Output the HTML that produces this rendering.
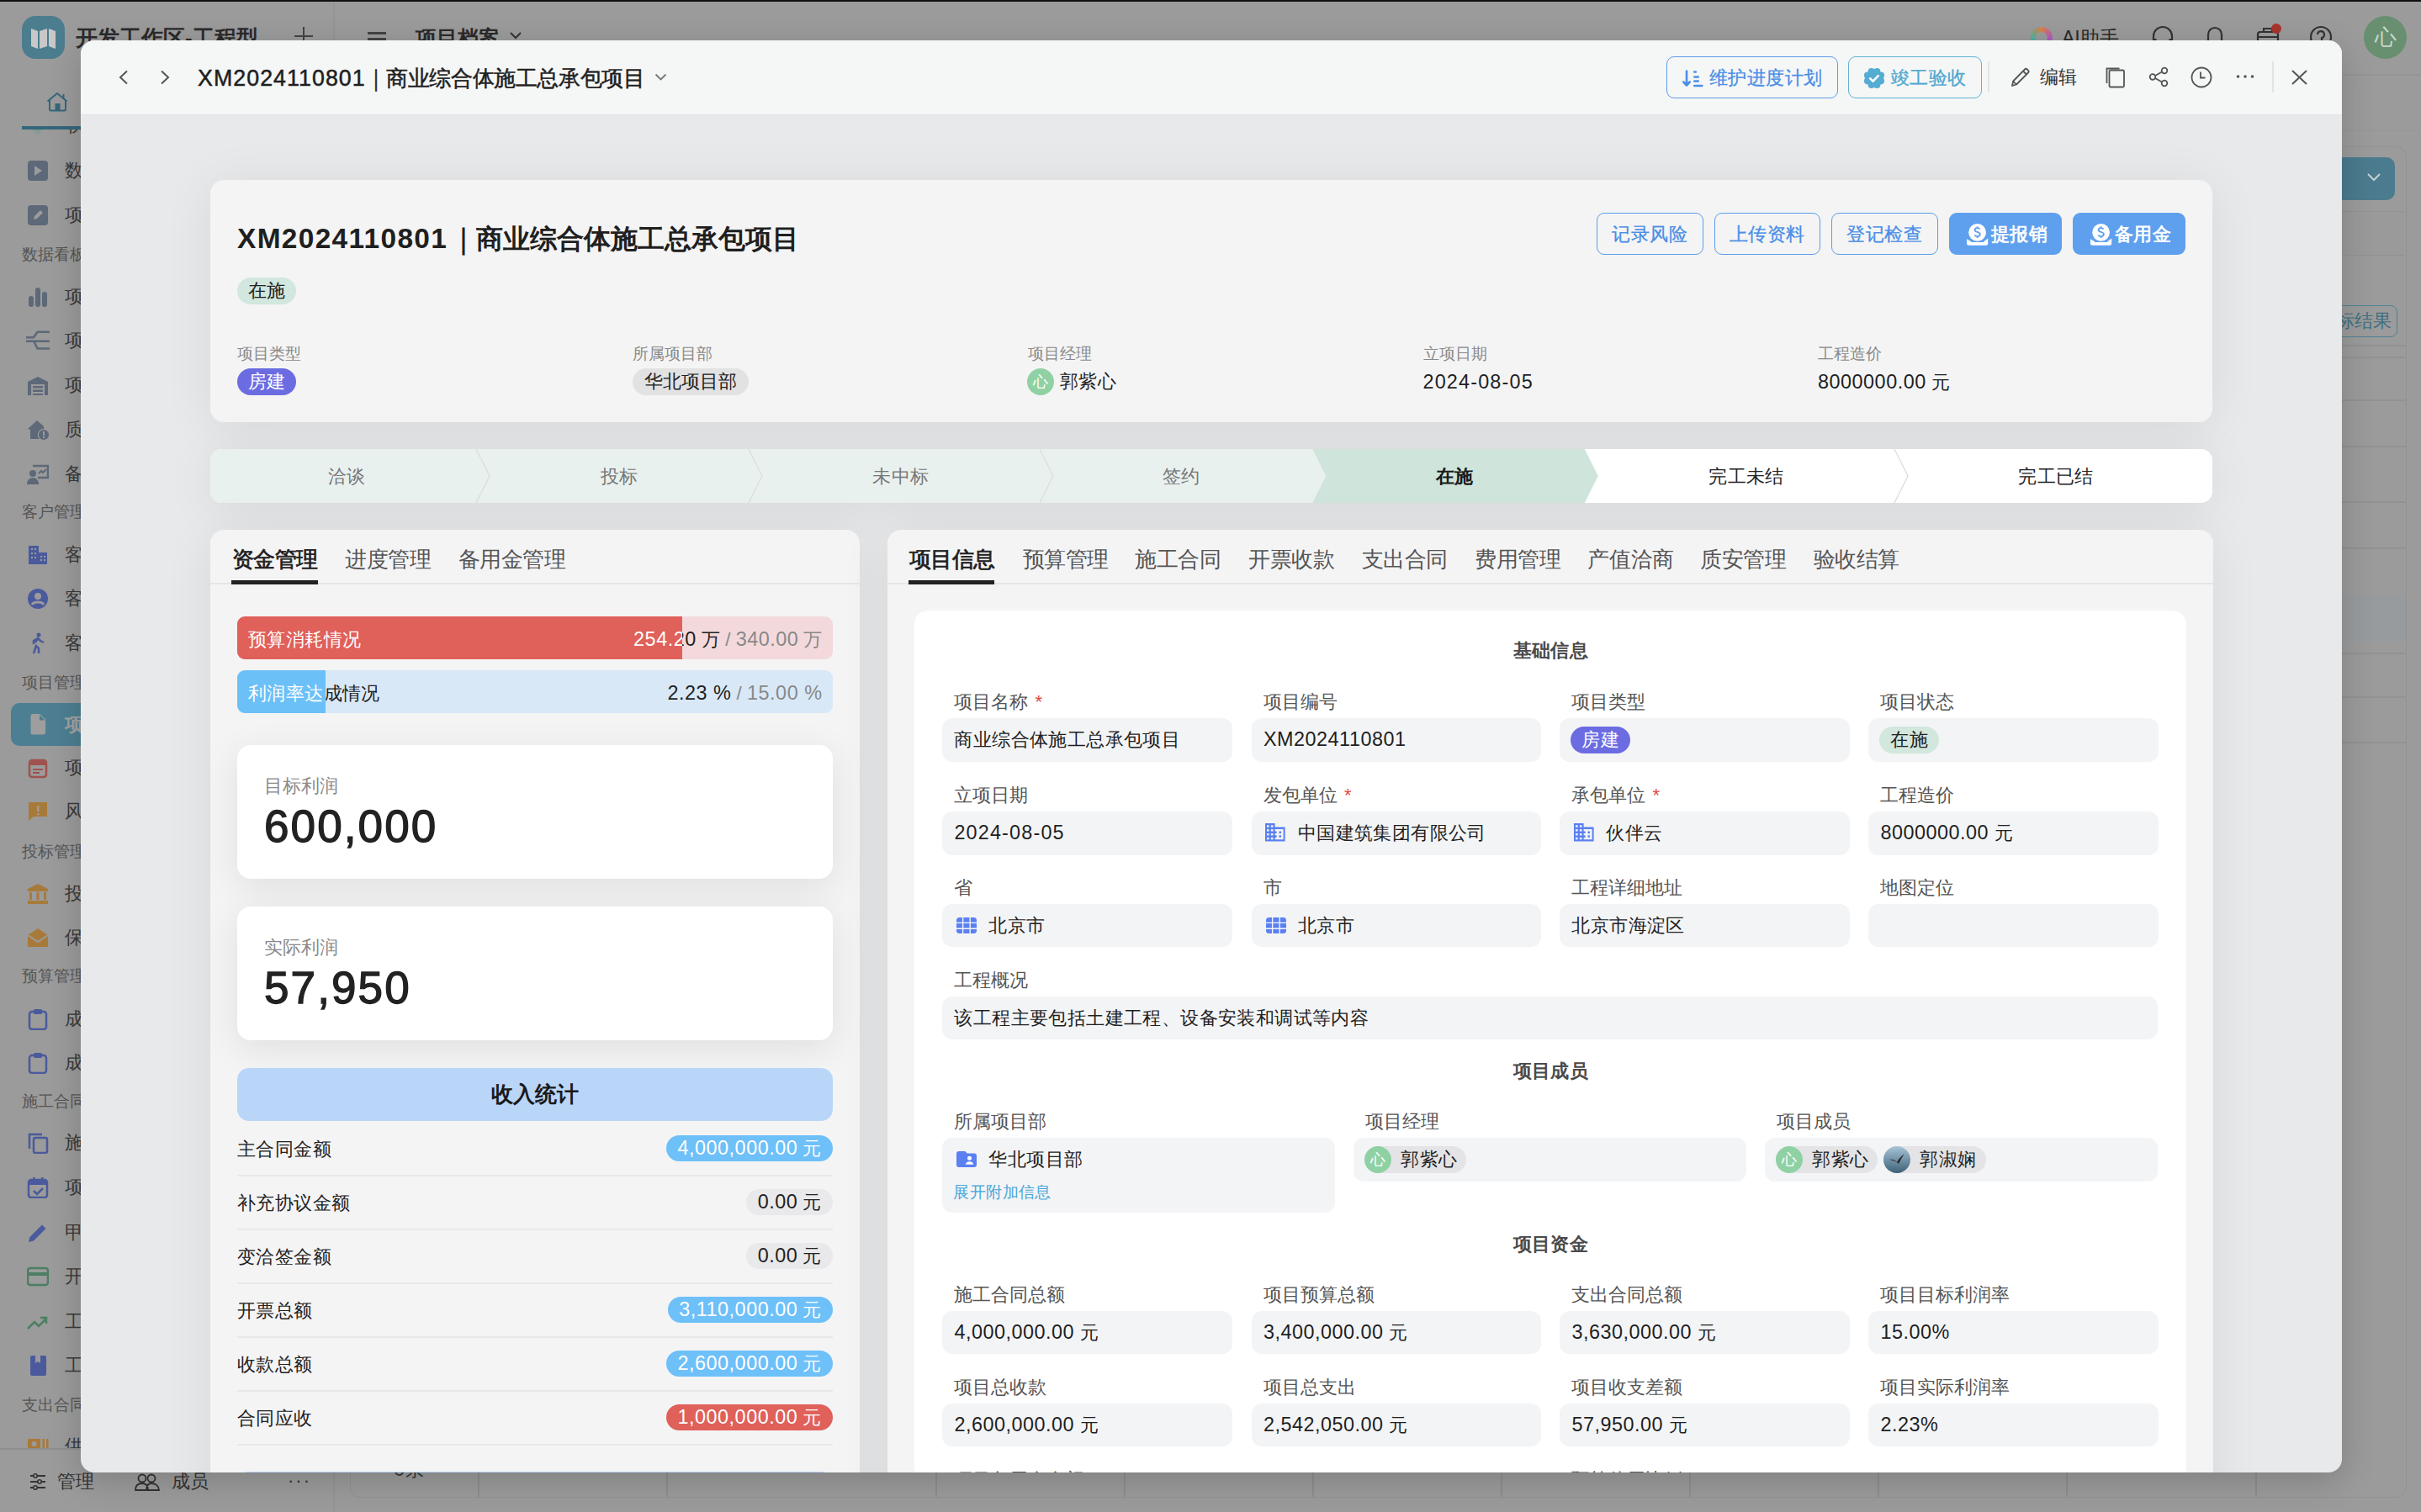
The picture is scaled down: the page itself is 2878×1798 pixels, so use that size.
<!DOCTYPE html>
<html><head><meta charset="utf-8">
<style>
*{box-sizing:border-box}
html,body{margin:0;padding:0}
body{width:2878px;height:1798px;overflow:hidden;position:relative;font-family:"Liberation Sans",sans-serif;background:#9b9b9b;color:#222}
.a{position:absolute}
.nw{white-space:nowrap}
/* ---------- background app ---------- */
#bg{position:absolute;left:0;top:0;width:2878px;height:1798px;background:#9b9b9b}
.sbtxt{position:absolute;font-size:22px;color:#3a3a3a;white-space:nowrap;line-height:26px}
.sbhdr{position:absolute;font-size:19px;color:#555;white-space:nowrap;line-height:22px;left:26px}
/* ---------- modal ---------- */
#modal{position:absolute;left:96px;top:48px;width:2688px;height:1703px;border-radius:16px;overflow:hidden;background:#e8e9eb;box-shadow:0 10px 40px rgba(0,0,0,.18)}
#mhead{position:absolute;left:0;top:0;width:2688px;height:89px;background:#f5f6f6;border-bottom:1px solid #e3e4e6}
.card{position:absolute;background:#f4f4f5;border-radius:16px}
.lbl{position:absolute;font-size:19px;color:#8a8a8a;white-space:nowrap;line-height:22px}
.val{position:absolute;font-size:22.4px;color:#1f1f1f;white-space:nowrap;line-height:26px}
.tag{position:absolute;height:32px;border-radius:16px;font-size:22px;line-height:32px;padding:0 13px;white-space:nowrap}
.obtn{position:absolute;height:50px;border:1.5px solid #5b9ee8;border-radius:9px;color:#4a8fe6;font-size:22.4px;line-height:50px;text-align:center;white-space:nowrap;-webkit-text-stroke-width:.3px}
.fbtn{position:absolute;height:50px;border-radius:9px;background:#5fa0ee;color:#fff;font-size:22.4px;line-height:50px;white-space:nowrap;-webkit-text-stroke-width:.7px}
.stg{position:absolute;top:0;height:64px;line-height:64px;font-size:22.4px;text-align:center;white-space:nowrap}
.tab{position:absolute;font-size:25.6px;letter-spacing:-.4px;line-height:30px;color:#555;white-space:nowrap}
.tab.on{color:#1f1f1f;-webkit-text-stroke-width:.75px}
.row{position:absolute;left:32px;width:708px;height:64px;border-bottom:2px solid #e8e8e9}
.row .rl{position:absolute;left:0;top:0;line-height:64px;font-size:22.4px;color:#222;white-space:nowrap}
.pill{position:absolute;right:0;top:15px;height:31px;line-height:31px;border-radius:16px;padding:0 13.5px;font-size:22.4px;white-space:nowrap}
.pb{background:#6ec0f8;color:#fff}
.pg{background:#e9e9eb;color:#222}
.pr{background:#e0605a;color:#fff}
.fl{position:absolute;font-size:22px;color:#555;white-space:nowrap;line-height:24px}
.fl i{color:#e5483f;font-style:normal;margin-left:8px}
.fb{position:absolute;height:51px;background:#f3f4f6;border-radius:12px;font-size:22.4px;line-height:51px;color:#1f1f1f;white-space:nowrap;padding-left:14px}
.n{font-size:1.045em;letter-spacing:.022em}
.nd{letter-spacing:.05em}
.nt{letter-spacing:.04em}
.m{-webkit-text-stroke-width:.5px}
.val,.fb,.rl,.obtn,.fbtn,.stg,.sh,.ls{letter-spacing:.4px}
.hls{letter-spacing:-.4px}
.sh{position:absolute;left:0;width:1512px;text-align:center;font-size:22.4px;font-weight:bold;color:#4a4a4a;line-height:26px}
</style></head><body>
<div id="bg">
    <div class="a" style="left:396px;top:0;width:2px;height:1798px;background:#959595"></div>
  <!-- logo -->
  <div class="a" style="left:26px;top:19px;width:51px;height:51px;border-radius:16px;background:#4b7d8e"></div>
  <svg class="a" style="left:36px;top:32px" width="31" height="27" viewBox="0 0 31 27"><path d="M1 2l8 3v21l-8-3z M11 5l9-3v21l-9 3z M22 2l8 3v21l-8-3z" fill="#c8c8c8"/></svg>
  <div class="a nw" style="left:90px;top:29px;font-size:25.6px;font-weight:bold;color:#2b2b2b;line-height:32px">开发工作区-工程型</div>
  <div class="a" style="left:350px;top:42px;width:22px;height:2px;background:#444"></div>
  <div class="a" style="left:360px;top:32px;width:2px;height:22px;background:#444"></div>
  <div class="a" style="left:437px;top:38px;width:22px;height:2.5px;background:#444"></div>
  <div class="a" style="left:437px;top:45px;width:22px;height:2.5px;background:#444"></div>
  <div class="a nw" style="left:494px;top:29px;font-size:25.2px;font-weight:bold;color:#2b2b2b;line-height:32px">项目档案</div>
  <svg class="a" style="left:606px;top:38px" width="14" height="9" viewBox="0 0 14 9"><path d="M1 1l6 6 6-6" stroke="#333" stroke-width="2" fill="none"/></svg>
  <!-- top right -->
  <div class="a" style="left:2414px;top:32px;width:26px;height:26px;border-radius:50%;background:conic-gradient(#d9824a,#b05bbd,#5c7fd0,#53b39e,#d9824a)"></div>
  <div class="a" style="left:2420px;top:38px;width:14px;height:14px;border-radius:50%;background:#9b9b9b"></div>
  <div class="a nw" style="left:2451px;top:31px;font-size:23px;color:#2b2b2b;line-height:28px">AI助手</div>
  <svg class="a" style="left:2557px;top:30px" width="28" height="26" viewBox="0 0 28 26"><path d="M3 20v-7a11 11 0 0 1 22 0v7" stroke="#333" stroke-width="2.2" fill="none"/><rect x="2" y="16" width="5" height="9" rx="2" fill="#333"/><rect x="21" y="16" width="5" height="9" rx="2" fill="#333"/></svg>
  <svg class="a" style="left:2622px;top:30px" width="22" height="26" viewBox="0 0 22 26"><path d="M3 20V11a8 8 0 0 1 16 0v9M1 20h20M9 24h4" stroke="#333" stroke-width="2.2" fill="none"/></svg>
  <svg class="a" style="left:2682px;top:32px" width="28" height="24" viewBox="0 0 28 24"><rect x="2" y="6" width="24" height="17" rx="3" stroke="#333" stroke-width="2.2" fill="none"/><path d="M9 6V2h10v4M2 12h24" stroke="#333" stroke-width="2.2" fill="none"/></svg>
  <div class="a" style="left:2700px;top:28px;width:12px;height:12px;border-radius:50%;background:#a8342c"></div>
  <svg class="a" style="left:2745px;top:30px" width="28" height="28" viewBox="0 0 28 28"><circle cx="14" cy="14" r="12" stroke="#333" stroke-width="2.2" fill="none"/><path d="M10 11a4 4 0 1 1 5 4v3" stroke="#333" stroke-width="2.2" fill="none"/></svg>
  <div class="a" style="left:2810px;top:19px;width:51px;height:51px;border-radius:50%;background:#678f70;color:#c9d8cc;font-size:26px;line-height:51px;text-align:center">心</div>
  <div class="a" style="left:398px;top:88px;width:2480px;height:1.5px;background:#959595"></div>
  <div class="a" style="left:398px;top:154px;width:2480px;height:1.5px;background:#989898"></div>
  <div class="a" style="left:0;top:154px;width:396px;height:12px;overflow:hidden">
    <div class="a nw" style="left:80px;top:-18px;font-size:22.4px;line-height:26px;color:#3a3a3a">快捷</div>
    <div class="a" style="left:34px;top:-4px;width:18px;height:12px;background:linear-gradient(200deg,#5a9a8a,rgba(90,154,138,0) 80%);clip-path:polygon(0 0,100% 0,60% 100%)"></div>
  </div>
  <!-- home tab -->
  <svg class="a" style="left:55px;top:109px" width="27" height="24" viewBox="0 0 27 24"><path d="M1.5 11.5L13 2l11.5 9.5M4 9.5V21a1.5 1.5 0 0 0 1.5 1.5h16A1.5 1.5 0 0 0 23 21V9.5M20.5 3v5" stroke="#34677a" stroke-width="2" fill="none"/><rect x="10.5" y="14" width="6" height="9" fill="#34677a"/></svg>
  <div class="a" style="left:26px;top:150px;width:370px;height:4px;background:#34677a"></div>
<!-- table card -->
  <div class="a" style="left:416px;top:174px;width:2445px;height:1607px;border:1.5px solid #929292;border-radius:12px"></div>
  <div class="a nw" style="left:468px;top:1733px;font-size:24px;line-height:28px;color:#3a3a3a">0条</div>
  <div class="a" style="left:568px;top:1751px;width:1.5px;height:29px;background:#8e8e8e"></div>
  <div class="a" style="left:792px;top:1751px;width:1.5px;height:29px;background:#8e8e8e"></div>
  <div class="a" style="left:1112px;top:1751px;width:1.5px;height:29px;background:#8e8e8e"></div>
  <div class="a" style="left:1336px;top:1751px;width:1.5px;height:29px;background:#8e8e8e"></div>
  <div class="a" style="left:1560px;top:1751px;width:1.5px;height:29px;background:#8e8e8e"></div>
  <div class="a" style="left:1784px;top:1751px;width:1.5px;height:29px;background:#8e8e8e"></div>
  <div class="a" style="left:2008px;top:1751px;width:1.5px;height:29px;background:#8e8e8e"></div>
  <div class="a" style="left:2232px;top:1751px;width:1.5px;height:29px;background:#8e8e8e"></div>
  <div class="a" style="left:2456px;top:1751px;width:1.5px;height:29px;background:#8e8e8e"></div>
  <div class="a" style="left:2681px;top:1751px;width:1.5px;height:29px;background:#8e8e8e"></div>
  <div class="a" style="left:2700px;top:187px;width:147px;height:51px;border-radius:10px;background:#4b7b8e"></div>
  <svg class="a" style="left:2814px;top:206px" width="16" height="10" viewBox="0 0 16 10"><path d="M1 1l7 7 7-7" stroke="#c6d0d4" stroke-width="2" fill="none"/></svg>
  <div class="a" style="left:2700px;top:251px;width:158px;height:53px;background:#9a9a9a;border-top:1.5px solid #929292;border-bottom:1.5px solid #929292"></div>
  <div class="a" style="left:2760px;top:363px;width:90px;height:38px;border:1.5px solid #4f8296;border-radius:8px;color:#3f6f82;font-size:22px;line-height:35px;text-align:right;padding-right:6px" class="nw">标结果</div>
  <div class="a" style="left:2700px;top:410px;width:160px;height:1.5px;background:#929292"></div>
  <div class="a" style="left:2700px;top:424px;width:160px;height:1.5px;background:#929292"></div>
  <div class="a" style="left:2700px;top:475px;width:160px;height:1.5px;background:#929292"></div>
  <div class="a" style="left:2700px;top:530px;width:160px;height:1.5px;background:#929292"></div>
  <div class="a" style="left:2700px;top:596px;width:160px;height:1.5px;background:#929292"></div>
  <div class="a" style="left:2700px;top:651px;width:160px;height:1.5px;background:#929292"></div>
  <div class="a" style="left:2700px;top:707px;width:160px;height:56px;background:#979b9e"></div>
  <div class="a" style="left:2700px;top:776px;width:160px;height:1.5px;background:#929292"></div>
  <div class="a" style="left:2700px;top:828px;width:160px;height:1.5px;background:#929292"></div>
  <div class="a" style="left:2700px;top:882px;width:160px;height:1.5px;background:#929292"></div>

<svg class="a" style="left:32px;top:190px" width="26" height="26" viewBox="0 0 26 26"><rect x="1" y="1" width="24" height="24" rx="4" fill="#5d6878"/><path d="M9 7v12l9-6z" fill="#9b9b9b"/></svg>
<div class="sbtxt" style="left:77px;top:190px;color:#3a3a3a">数目</div>
<svg class="a" style="left:32px;top:243px" width="26" height="26" viewBox="0 0 26 26"><rect x="1" y="1" width="24" height="24" rx="4" fill="#5d6878"/><path d="M8 18l1-4 7-7 3 3-7 7z" fill="#9b9b9b"/></svg>
<div class="sbtxt" style="left:77px;top:243px;color:#3a3a3a">项目</div>
<svg class="a" style="left:32px;top:340px" width="26" height="26" viewBox="0 0 26 26"><rect x="2" y="12" width="6" height="13" rx="3" fill="#5d6878"/><rect x="10" y="2" width="6" height="23" rx="3" fill="#5d6878"/><rect x="18" y="7" width="6" height="18" rx="3" fill="#5d6878"/></svg>
<div class="sbtxt" style="left:77px;top:340px;color:#3a3a3a">项目</div>
<svg class="a" style="left:31px;top:393px" width="28" height="24" viewBox="0 0 28 24"><path d="M0 8.3H9L13.5 1.7H28M0 12.7H28M9.5 13.2L13.5 21.5H28" stroke="#5d6878" stroke-width="2.6" fill="none" stroke-linejoin="round"/></svg>
<div class="sbtxt" style="left:77px;top:392px;color:#3a3a3a">项目</div>
<svg class="a" style="left:32px;top:445px" width="26" height="26" viewBox="0 0 26 26"><path d="M1 25V9l12-6 12 6v16h-4V12H5v13z" fill="#5d6878"/><rect x="7" y="14" width="12" height="2.5" fill="#5d6878"/><rect x="7" y="18.5" width="12" height="2.5" fill="#5d6878"/><rect x="7" y="23" width="12" height="2" fill="#5d6878"/></svg>
<div class="sbtxt" style="left:77px;top:445px;color:#3a3a3a">项目</div>
<svg class="a" style="left:32px;top:498px" width="26" height="26" viewBox="0 0 26 26"><path d="M1 12L12 2l8 7v3a7 7 0 0 0-5 12H4V13z" fill="#5d6878"/><circle cx="20" cy="19" r="6" fill="#5d6878"/><rect x="19" y="15" width="2" height="5" fill="#9b9b9b"/><rect x="19" y="21" width="2" height="2" fill="#9b9b9b"/></svg>
<div class="sbtxt" style="left:77px;top:498px;color:#3a3a3a">质目</div>
<svg class="a" style="left:32px;top:551px" width="26" height="26" viewBox="0 0 26 26"><path d="M7 3h18v14H13" stroke="#5d6878" stroke-width="2.5" fill="none"/><circle cx="7" cy="12" r="4" fill="#5d6878"/><path d="M0 25c0-5 3-8 7-8s7 3 7 8z" fill="#5d6878"/><path d="M14 12l3-3 2 2 4-4" stroke="#5d6878" stroke-width="2" fill="none"/></svg>
<div class="sbtxt" style="left:77px;top:551px;color:#3a3a3a">备目</div>
<svg class="a" style="left:32px;top:647px" width="26" height="26" viewBox="0 0 26 26"><path d="M2 2h12v8h10v14H2z" fill="#4a5a9c"/><g fill="#9b9b9b"><rect x="5" y="5" width="2" height="2"/><rect x="9" y="5" width="2" height="2"/><rect x="5" y="10" width="2" height="2"/><rect x="9" y="10" width="2" height="2"/><rect x="5" y="15" width="2" height="2"/><rect x="9" y="15" width="2" height="2"/><rect x="16" y="14" width="2" height="2"/><rect x="20" y="14" width="2" height="2"/><rect x="16" y="18" width="2" height="2"/><rect x="20" y="18" width="2" height="2"/></g></svg>
<div class="sbtxt" style="left:77px;top:647px;color:#3a3a3a">客目</div>
<svg class="a" style="left:32px;top:699px" width="26" height="26" viewBox="0 0 26 26"><circle cx="13" cy="13" r="12" fill="#4a5a9c"/><circle cx="13" cy="10" r="4" fill="#9b9b9b"/><path d="M6 20c2-4 12-4 14 0" stroke="#9b9b9b" stroke-width="3" fill="none"/></svg>
<div class="sbtxt" style="left:77px;top:699px;color:#3a3a3a">客目</div>
<svg class="a" style="left:32px;top:752px" width="26" height="26" viewBox="0 0 26 26"><circle cx="14" cy="3" r="2.5" fill="#4a5a9c"/><path d="M8 25l3-9 3 3v6M10 12l3-5 3 3 4 2M13 7l-5 3v4" stroke="#4a5a9c" stroke-width="2.5" fill="none"/></svg>
<div class="sbtxt" style="left:77px;top:752px;color:#3a3a3a">客目</div>
<div class="a" style="left:13px;top:836px;width:400px;height:51px;border-radius:10px;background:#4d7f92"></div>
<svg class="a" style="left:32px;top:849px" width="26" height="26" viewBox="0 0 26 26"><path d="M7 0h8.5L22 6.5V22a2.5 2.5 0 0 1-2.5 2.5H7A2.5 2.5 0 0 1 4.5 22V2.5A2.5 2.5 0 0 1 7 0z" fill="#9e9e9e"/><path d="M15 1v6.5h6.5" fill="#4d7f92"/></svg>
<div class="sbtxt" style="left:77px;top:849px;color:#a3a3a3;font-weight:bold">项目</div>
<svg class="a" style="left:32px;top:900px" width="26" height="26" viewBox="0 0 26 26"><rect x="3" y="4" width="20" height="20" rx="3" stroke="#a0524e" stroke-width="2.5" fill="none"/><rect x="3" y="4" width="20" height="6" fill="#a0524e"/><rect x="7" y="14" width="12" height="2" fill="#a0524e"/><rect x="7" y="18" width="8" height="2" fill="#a0524e"/></svg>
<div class="sbtxt" style="left:77px;top:900px;color:#3a3a3a">项目</div>
<svg class="a" style="left:32px;top:952px" width="26" height="26" viewBox="0 0 26 26"><path d="M2 2h22v17H8l-6 5z" fill="#a87a3a"/><rect x="12" y="6" width="2.5" height="7" fill="#9b9b9b"/><rect x="12" y="15" width="2.5" height="2.5" fill="#9b9b9b"/></svg>
<div class="sbtxt" style="left:77px;top:952px;color:#3a3a3a">风目</div>
<svg class="a" style="left:32px;top:1050px" width="26" height="26" viewBox="0 0 26 26"><path d="M13 1l12 6v3H1V7z" fill="#a87a3a"/><rect x="3" y="11" width="3" height="9" fill="#a87a3a"/><rect x="11.5" y="11" width="3" height="9" fill="#a87a3a"/><rect x="20" y="11" width="3" height="9" fill="#a87a3a"/><rect x="1" y="21" width="24" height="4" fill="#a87a3a"/></svg>
<div class="sbtxt" style="left:77px;top:1050px;color:#3a3a3a">投目</div>
<svg class="a" style="left:32px;top:1102px" width="26" height="26" viewBox="0 0 26 26"><path d="M1 10l12-8 12 8v14H1z" fill="#a87a3a"/><path d="M1 10l12 8 12-8" stroke="#9b9b9b" stroke-width="2" fill="none"/></svg>
<div class="sbtxt" style="left:77px;top:1102px;color:#3a3a3a">保目</div>
<svg class="a" style="left:32px;top:1199px" width="26" height="26" viewBox="0 0 26 26"><rect x="3" y="4" width="20" height="21" rx="3" stroke="#4a5a9c" stroke-width="2.5" fill="none"/><rect x="8" y="1" width="10" height="6" rx="1.5" fill="#4a5a9c"/></svg>
<div class="sbtxt" style="left:77px;top:1199px;color:#3a3a3a">成目</div>
<svg class="a" style="left:32px;top:1251px" width="26" height="26" viewBox="0 0 26 26"><rect x="3" y="4" width="20" height="21" rx="3" stroke="#4a5a9c" stroke-width="2.5" fill="none"/><rect x="8" y="1" width="10" height="6" rx="1.5" fill="#4a5a9c"/></svg>
<div class="sbtxt" style="left:77px;top:1251px;color:#3a3a3a">成目</div>
<svg class="a" style="left:32px;top:1346px" width="26" height="26" viewBox="0 0 26 26"><rect x="8" y="7" width="16" height="18" rx="2" stroke="#4a5a9c" stroke-width="2.5" fill="none"/><path d="M3 20V3h15" stroke="#4a5a9c" stroke-width="2.5" fill="none"/></svg>
<div class="sbtxt" style="left:77px;top:1346px;color:#3a3a3a">施目</div>
<svg class="a" style="left:32px;top:1399px" width="26" height="26" viewBox="0 0 26 26"><rect x="2" y="4" width="22" height="21" rx="3" stroke="#4a5a9c" stroke-width="2.5" fill="none"/><rect x="2" y="4" width="22" height="6" fill="#4a5a9c"/><rect x="7" y="1" width="2.5" height="5" fill="#4a5a9c"/><rect x="17" y="1" width="2.5" height="5" fill="#4a5a9c"/><path d="M8 17l4 4 7-7" stroke="#4a5a9c" stroke-width="2.5" fill="none"/></svg>
<div class="sbtxt" style="left:77px;top:1399px;color:#3a3a3a">项目</div>
<svg class="a" style="left:32px;top:1453px" width="26" height="26" viewBox="0 0 26 26"><path d="M2 24l1.5-6L18 3.5l4.5 4.5L8 22.5z" fill="#4a5a9c"/></svg>
<div class="sbtxt" style="left:77px;top:1453px;color:#3a3a3a">甲目</div>
<svg class="a" style="left:32px;top:1505px" width="26" height="26" viewBox="0 0 26 26"><rect x="1" y="3" width="24" height="20" rx="3" stroke="#4a7f62" stroke-width="2.5" fill="none"/><rect x="1" y="8" width="24" height="4" fill="#4a7f62"/></svg>
<div class="sbtxt" style="left:77px;top:1505px;color:#3a3a3a">开目</div>
<svg class="a" style="left:32px;top:1559px" width="26" height="26" viewBox="0 0 26 26"><path d="M1 21l8-8 5 5 9-9M16 8h7v7" stroke="#4a7f62" stroke-width="2.5" fill="none"/></svg>
<div class="sbtxt" style="left:77px;top:1559px;color:#3a3a3a">工目</div>
<svg class="a" style="left:32px;top:1611px" width="26" height="26" viewBox="0 0 26 26"><rect x="4" y="1" width="19" height="24" rx="2" fill="#4a5a9c"/><path d="M10 1v9l3-2 3 2V1" fill="#9b9b9b"/></svg>
<div class="sbtxt" style="left:77px;top:1611px;color:#3a3a3a">工目</div>
<svg class="a" style="left:32px;top:1711px" width="26" height="26" viewBox="0 0 26 26"><rect x="1" y="0" width="15" height="20" rx="1.5" fill="#a87a3a"/><circle cx="8.5" cy="6" r="3" fill="#9b9b9b"/><rect x="18.5" y="0" width="2.5" height="20" fill="#a87a3a"/><rect x="23" y="0" width="2.5" height="20" fill="#a87a3a"/></svg>
<div class="sbtxt" style="left:77px;top:1707px;color:#3a3a3a">供目</div>
<div class="sbhdr" style="top:292px">数据看板</div>
<div class="sbhdr" style="top:598px">客户管理</div>
<div class="sbhdr" style="top:801px">项目管理</div>
<div class="sbhdr" style="top:1002px">投标管理</div>
<div class="sbhdr" style="top:1150px">预算管理</div>
<div class="sbhdr" style="top:1299px">施工合同</div>
<div class="sbhdr" style="top:1660px">支出合同</div>
  <!-- bottom bar -->
  <div class="a" style="left:0;top:1723px;width:396px;height:75px;background:#9b9b9b"></div>
  <div class="a" style="left:0;top:1722px;width:396px;height:1.5px;background:#8e8e8e"></div>
  <svg class="a" style="left:35px;top:1752px" width="20" height="20" viewBox="0 0 20 20"><path d="M1 3h18M1 10h18M1 17h18" stroke="#333" stroke-width="1.8"/><circle cx="7" cy="3" r="2.2" fill="#9b9b9b" stroke="#333" stroke-width="1.6"/><circle cx="12" cy="10" r="2.2" fill="#9b9b9b" stroke="#333" stroke-width="1.6"/><circle cx="7" cy="17" r="2.2" fill="#9b9b9b" stroke="#333" stroke-width="1.6"/></svg>
  <div class="a nw" style="left:68px;top:1749px;font-size:22.4px;color:#333;line-height:26px">管理</div>
  <svg class="a" style="left:160px;top:1752px" width="30" height="21" viewBox="0 0 30 21"><circle cx="9" cy="6" r="4.5" stroke="#333" stroke-width="1.8" fill="none"/><circle cx="20" cy="6" r="4.5" stroke="#333" stroke-width="1.8" fill="none"/><path d="M1 20c0-5 3-8 8-8s7 3 7 8zM14 20c0-5 2-8 6-8 5 0 9 3 9 8z" stroke="#333" stroke-width="1.8" fill="none"/></svg>
  <div class="a nw" style="left:204px;top:1749px;font-size:22.4px;color:#333;line-height:26px">成员</div>
  <div class="a nw" style="left:342px;top:1748px;font-size:22px;color:#333;line-height:26px;letter-spacing:2px">···</div>
    <div class="a" style="left:0;top:0;width:2878px;height:1.5px;background:#111"></div>
</div>

<div id="modal">
<div id="mhead">
<svg class="a" style="left:44px;top:35px" width="14" height="18" viewBox="0 0 14 18"><path d="M11 1.5L3 9l8 7.5" stroke="#555" stroke-width="2" fill="none"/></svg>
<svg class="a" style="left:93px;top:35px" width="14" height="18" viewBox="0 0 14 18"><path d="M3 1.5L11 9l-8 7.5" stroke="#555" stroke-width="2" fill="none"/></svg>
<div class="a nw" style="left:139px;top:29px;font-size:25.6px;line-height:32px;-webkit-text-stroke-width:.5px;color:#1f1f1f"><span class="n nt">XM2024110801</span><span style="margin-left:-1px">｜</span><span class="hls" style="margin-left:.5px">商业综合体施工总承包项目</span></div>
<svg class="a" style="left:682px;top:39px" width="15" height="10" viewBox="0 0 15 10"><path d="M1.5 1.5l6 6 6-6" stroke="#777" stroke-width="1.8" fill="none"/></svg>
<div class="obtn" style="left:1885px;top:19px;width:204px"><svg style="position:absolute;left:18px;top:15px" width="26" height="21" viewBox="0 0 26 21"><path d="M5 1.5v17M1.3 14.5l3.7 4 3.7-4" stroke="#4a8fe6" stroke-width="2.6" fill="none" stroke-linecap="round" stroke-linejoin="round"/><path d="M14.3 2.5h1.5M14.3 8.5h4.5M14.3 13.5h4.5M14.3 19h9" stroke="#4a8fe6" stroke-width="2.6" stroke-linecap="round"/></svg><span style="position:absolute;left:50px;top:0">维护进度计划</span></div>
<div class="obtn" style="left:2101px;top:19px;width:159px;border-color:#62b2d4;color:#4ea8d0"><svg style="position:absolute;left:17px;top:12px" width="26" height="26" viewBox="0 0 26 26"><circle cx="13" cy="13" r="10" fill="#55acd3"/><circle cx="20.95" cy="16.29" r="4.1" fill="#55acd3"/><circle cx="16.29" cy="20.95" r="4.1" fill="#55acd3"/><circle cx="9.71" cy="20.95" r="4.1" fill="#55acd3"/><circle cx="5.05" cy="16.29" r="4.1" fill="#55acd3"/><circle cx="5.05" cy="9.71" r="4.1" fill="#55acd3"/><circle cx="9.71" cy="5.05" r="4.1" fill="#55acd3"/><circle cx="16.29" cy="5.05" r="4.1" fill="#55acd3"/><circle cx="20.95" cy="9.71" r="4.1" fill="#55acd3"/><path d="M8.2 13.4l3.3 3.3 6.3-6.6" stroke="#fff" stroke-width="2.6" fill="none" stroke-linecap="round" stroke-linejoin="round"/></svg><span style="position:absolute;left:50px;top:0">竣工验收</span></div>
<div class="a" style="left:2267px;top:25px;width:1.5px;height:37px;background:#e2e3e5"></div>
<svg class="a" style="left:2294px;top:31px" width="24" height="25" viewBox="0 0 24 25"><path d="M2 23l1.2-5.5L17 3.5a2 2 0 0 1 2.8 0l1.2 1.2a2 2 0 0 1 0 2.8L7 21.5z M3.2 17.5L7 21.5 M15 5.5l3.5 3.5" stroke="#555" stroke-width="1.8" fill="none" stroke-linejoin="round"/></svg>
<div class="a nw" style="left:2329px;top:30px;font-size:22.4px;line-height:28px;color:#333">编辑</div>
<svg class="a" style="left:2407px;top:31px" width="24" height="26" viewBox="0 0 24 26"><path d="M1.5 20V2.5h15" stroke="#555" stroke-width="1.8" fill="none"/><rect x="4.5" y="4.5" width="17.5" height="20" rx="1.5" stroke="#555" stroke-width="1.8" fill="none"/></svg>
<svg class="a" style="left:2458px;top:31px" width="25" height="25" viewBox="0 0 25 25"><circle cx="19" cy="5" r="3.3" stroke="#555" stroke-width="1.8" fill="none"/><circle cx="5" cy="12.5" r="3.3" stroke="#555" stroke-width="1.8" fill="none"/><circle cx="19" cy="20" r="3.3" stroke="#555" stroke-width="1.8" fill="none"/><path d="M8 11l8-4.5M8 14l8 4.5" stroke="#555" stroke-width="1.8"/></svg>
<svg class="a" style="left:2508px;top:31px" width="26" height="26" viewBox="0 0 26 26"><circle cx="13" cy="13" r="11.5" stroke="#555" stroke-width="1.8" fill="none"/><path d="M12 6.5v7h5.5" stroke="#555" stroke-width="1.8" fill="none"/></svg>
<svg class="a" style="left:2562px;top:40px" width="22" height="6" viewBox="0 0 22 6"><circle cx="2.5" cy="3" r="1.8" fill="#555"/><circle cx="11" cy="3" r="1.8" fill="#555"/><circle cx="19.5" cy="3" r="1.8" fill="#555"/></svg>
<div class="a" style="left:2605px;top:25px;width:1.5px;height:37px;background:#e2e3e5"></div>
<svg class="a" style="left:2627px;top:34px" width="21" height="20" viewBox="0 0 21 20"><path d="M2 2l17 16M19 2L2 18" stroke="#555" stroke-width="2" fill="none"/></svg>
</div>
<div class="card" style="left:154px;top:166px;width:2380px;height:288px;box-shadow:0 6px 60px rgba(0,0,0,.075)">
<div class="a nw" style="left:32px;top:50px;font-size:32px;line-height:40px;font-weight:bold;color:#1f1f1f"><span class="n nt">XM2024110801</span><span style="margin-left:3px">｜</span><span style="margin-left:0px">商业综合体施工总承包项目</span></div>
<div class="tag" style="left:32px;top:116px;background:#d2e7dd;color:#222">在施</div>
<div class="lbl" style="left:32px;top:196px">项目类型</div>
<div class="lbl" style="left:501.5px;top:196px">所属项目部</div>
<div class="lbl" style="left:971.6px;top:196px">项目经理</div>
<div class="lbl" style="left:1441.5px;top:196px">立项日期</div>
<div class="lbl" style="left:1911px;top:196px">工程造价</div>
<div class="tag" style="left:32px;top:224px;background:#6c6ce2;color:#fff">房建</div>
<div class="tag" style="left:501.5px;top:224px;background:#e2e2e3;color:#222;padding:0 14px">华北项目部</div>
<div class="a" style="left:971px;top:224px;width:32px;height:32px;border-radius:50%;background:#8fd1a3;color:#fff;font-size:18px;line-height:32px;text-align:center">心</div>
<div class="val" style="left:1010px;top:227px">郭紫心</div>
<div class="val" style="left:1441.5px;top:227px"><span class="n nd">2024-08-05</span></div>
<div class="val" style="left:1911px;top:227px"><span class="n">8000000.00</span> 元</div>
<div class="obtn" style="left:1648px;top:39px;width:126.6px">记录风险</div>
<div class="obtn" style="left:1788px;top:39px;width:125.5px">上传资料</div>
<div class="obtn" style="left:1927px;top:39px;width:126.6px">登记检查</div>
<div class="fbtn" style="left:2067px;top:39px;width:134px"><svg style="position:absolute;left:21px;top:12px" width="26" height="28" viewBox="0 0 26 28"><circle cx="12.6" cy="11.4" r="10.4" fill="#fff"/><path d="M15.6 7.6c-.6-1-1.6-1.5-3-1.5-1.8 0-3 1-3 2.3 0 3.2 6.2 1.8 6.2 5.2 0 1.4-1.3 2.5-3.2 2.5-1.5 0-2.6-.6-3.3-1.7M12.6 4.3v2M12.6 16v2" stroke="#5fa0ee" stroke-width="1.9" fill="none"/><path d="M0 19.2L5.2 22.2V23H20.2V22.2L25.2 18.6V24.6A2.2 2.2 0 0 1 23 26.8H2.2A2.2 2.2 0 0 1 0 24.6Z" fill="#fff"/></svg><span style="position:absolute;left:50px;top:.7px">提报销</span></div>
<div class="fbtn" style="left:2214px;top:39px;width:134px"><svg style="position:absolute;left:21px;top:12px" width="26" height="28" viewBox="0 0 26 28"><circle cx="12.6" cy="11.4" r="10.4" fill="#fff"/><path d="M15.6 7.6c-.6-1-1.6-1.5-3-1.5-1.8 0-3 1-3 2.3 0 3.2 6.2 1.8 6.2 5.2 0 1.4-1.3 2.5-3.2 2.5-1.5 0-2.6-.6-3.3-1.7M12.6 4.3v2M12.6 16v2" stroke="#5fa0ee" stroke-width="1.9" fill="none"/><path d="M0 19.2L5.2 22.2V23H20.2V22.2L25.2 18.6V24.6A2.2 2.2 0 0 1 23 26.8H2.2A2.2 2.2 0 0 1 0 24.6Z" fill="#fff"/></svg><span style="position:absolute;left:50px;top:.7px">备用金</span></div>
</div>
<div class="a" style="left:154px;top:486px;width:2380px;height:64px;border-radius:14px;overflow:hidden;background:#fff;box-shadow:0 6px 60px rgba(0,0,0,.075)">
<svg class="a" style="left:0;top:0" width="2380" height="64" viewBox="0 0 2380 64">
<polygon points="0,0 316,0 332,32 316,64 0,64" fill="#e9f1ef"/>
<polygon points="316,0 640,0 656,32 640,64 316,64 332,32" fill="#e9f1ef"/>
<polygon points="640,0 986,0 1002,32 986,64 640,64 656,32" fill="#e9f1ef"/>
<polygon points="986,0 1310,0 1326,32 1310,64 986,64 1002,32" fill="#e9f1ef"/>
<polygon points="1310,0 1634,0 1650,32 1634,64 1310,64 1326,32" fill="#cfe5dc"/>
<polygon points="1634,0 2002,0 2018,32 2002,64 1634,64 1650,32" fill="#ffffff"/>
<polygon points="2002,0 2380,0 2380,64 2002,64 2018,32" fill="#ffffff"/>
<path d="M316 0L332 32L316 64" stroke="#d9dedd" stroke-width="1.3" fill="none"/>
<path d="M640 0L656 32L640 64" stroke="#d9dedd" stroke-width="1.3" fill="none"/>
<path d="M986 0L1002 32L986 64" stroke="#d9dedd" stroke-width="1.3" fill="none"/>
<path d="M2002 0L2018 32L2002 64" stroke="#d9dedd" stroke-width="1.3" fill="none"/>
</svg>
<div class="stg" style="left:62px;top:1px;width:200px;color:#777">洽谈</div>
<div class="stg" style="left:386px;top:1px;width:200px;color:#777">投标</div>
<div class="stg" style="left:721px;top:1px;width:200px;color:#777">未中标</div>
<div class="stg" style="left:1054px;top:1px;width:200px;color:#777">签约</div>
<div class="stg" style="left:1379.5px;top:1px;width:200px;color:#1a1a1a;font-weight:bold">在施</div>
<div class="stg" style="left:1726px;top:1px;width:200px;color:#222">完工未结</div>
<div class="stg" style="left:2094px;top:1px;width:200px;color:#222">完工已结</div>
</div>
<div class="card" style="left:154px;top:582px;width:772px;height:1200px;box-shadow:0 6px 60px rgba(0,0,0,.075)">
<div class="a" style="left:0;top:63px;width:772px;height:1.5px;background:#e6e6e7"></div>
<div class="tab on" style="left:25.7px;top:19.5px">资金管理</div>
<div class="tab" style="left:160px;top:19.5px">进度管理</div>
<div class="tab" style="left:294.7px;top:19.5px">备用金管理</div>
<div class="a" style="left:25px;top:60px;width:103px;height:5px;background:#222"></div>
<div class="a" style="left:32px;top:103px;width:707.5px;height:51px;border-radius:9px;overflow:hidden;background:#f3d9db">
<div class="a nw" style="right:12px;top:2px;line-height:51px;font-size:22.4px;color:#1f1f1f"><span class="n">254.20</span> 万 <span style="color:#888">/ <span class="n">340.00</span> 万</span></div>
<div class="a" style="left:0;top:0;width:528.7px;height:51px;background:#e0605a;overflow:hidden">
<div class="a nw ls" style="left:13px;top:2px;line-height:51px;font-size:22.4px;color:#fff">预算消耗情况</div>
<div class="a nw" style="left:0;width:707.5px;text-align:right;padding-right:12px;top:2px;line-height:51px;font-size:22.4px;color:#fff"><span class="n">254.20</span> 万 <span style="color:#fff">/ <span class="n">340.00</span> 万</span></div>
</div></div>
<div class="a" style="left:32px;top:167px;width:707.5px;height:51px;border-radius:9px;overflow:hidden;background:#d9e8f7">
<div class="a nw ls" style="left:13px;top:2px;line-height:51px;font-size:22.4px;color:#1f1f1f">利润率达成情况</div>
<div class="a nw" style="right:12px;top:2px;line-height:51px;font-size:22.4px;color:#1f1f1f"><span class="n">2.23 %</span> <span style="color:#888">/ <span class="n">15.00 %</span></span></div>
<div class="a" style="left:0;top:0;width:104.7px;height:51px;background:#6cc0f8;overflow:hidden">
<div class="a nw ls" style="left:13px;top:2px;line-height:51px;font-size:22.4px;color:#fff">利润率达成情况</div>
</div></div>
<div class="a" style="left:32px;top:256px;width:707.5px;height:159px;border-radius:16px;background:#fff;box-shadow:0 10px 44px rgba(0,0,0,.085)">
<div class="lbl" style="left:32px;top:36.5px;font-size:22px;line-height:24px">目标利润</div>
<div class="a nw" style="left:32px;top:67px;font-size:53px;line-height:60px;-webkit-text-stroke-width:1.3px;letter-spacing:2.1px;color:#222">600,000</div>
</div>
<div class="a" style="left:32px;top:448px;width:707.5px;height:159px;border-radius:16px;background:#fff;box-shadow:0 10px 44px rgba(0,0,0,.085)">
<div class="lbl" style="left:32px;top:36.5px;font-size:22px;line-height:24px">实际利润</div>
<div class="a nw" style="left:32px;top:67px;font-size:53px;line-height:60px;-webkit-text-stroke-width:1.3px;letter-spacing:2.1px;color:#222">57,950</div>
</div>
<div class="a" style="left:32px;top:640px;width:707.5px;height:63px;border-radius:14px;background:#b9d6f8;text-align:center;line-height:63px;font-size:25.6px;font-weight:bold;color:#1a1a1a">收入统计</div>
<div class="row" style="top:704.5px"><div class="rl">主合同金额</div><div class="pill pb"><span class="n">4,000,000.00</span> 元</div></div>
<div class="row" style="top:768.5px"><div class="rl">补充协议金额</div><div class="pill pg"><span class="n">0.00</span> 元</div></div>
<div class="row" style="top:832.5px"><div class="rl">变洽签金额</div><div class="pill pg"><span class="n">0.00</span> 元</div></div>
<div class="row" style="top:896.5px"><div class="rl">开票总额</div><div class="pill pb"><span class="n">3,110,000.00</span> 元</div></div>
<div class="row" style="top:960.5px"><div class="rl">收款总额</div><div class="pill pb"><span class="n">2,600,000.00</span> 元</div></div>
<div class="row" style="top:1024.5px"><div class="rl">合同应收</div><div class="pill pr"><span class="n">1,000,000.00</span> 元</div></div>
<div class="a" style="left:32px;top:1120px;width:707.5px;height:63px;border-radius:14px;background:#b9d6f8"></div>
</div>
<div class="card" style="left:959px;top:582px;width:1576px;height:1200px;box-shadow:0 6px 60px rgba(0,0,0,.075)">
<div class="a" style="left:0;top:63px;width:1576px;height:1.5px;background:#e6e6e7"></div>
<div class="tab on" style="left:25.6px;top:19.5px">项目信息</div>
<div class="tab" style="left:160.5px;top:19.5px">预算管理</div>
<div class="tab" style="left:294px;top:19.5px">施工合同</div>
<div class="tab" style="left:429px;top:19.5px">开票收款</div>
<div class="tab" style="left:563.6px;top:19.5px">支出合同</div>
<div class="tab" style="left:698px;top:19.5px">费用管理</div>
<div class="tab" style="left:832.4px;top:19.5px">产值洽商</div>
<div class="tab" style="left:966px;top:19.5px">质安管理</div>
<div class="tab" style="left:1100.7px;top:19.5px">验收结算</div>
<div class="a" style="left:25px;top:60px;width:102px;height:5px;background:#222"></div>
<div class="a" style="left:32.4px;top:96px;width:1511.6px;height:1100px;border-radius:16px;background:#fff">
<div class="sh" style="top:35px">基础信息</div>
<div class="fl" style="left:47px;top:97px">项目名称<i>*</i></div>
<div class="fl" style="left:414.5px;top:97px">项目编号</div>
<div class="fl" style="left:781px;top:97px">项目类型</div>
<div class="fl" style="left:1148px;top:97px">项目状态</div>
<div class="fb" style="left:33px;top:128px;width:344.5px;height:52px;padding-left:14px">商业综合体施工总承包项目</div>
<div class="fb" style="left:400.5px;top:128px;width:344.5px;height:52px;padding-left:14px"><span class="n">XM2024110801</span></div>
<div class="fb" style="left:767px;top:128px;width:344.5px;height:52px;padding-left:14px"><span class="tag" style="left:13px;top:10px;background:#6c6ce2;color:#fff;line-height:32px">房建</span></div>
<div class="fb" style="left:1134px;top:128px;width:344.5px;height:52px;padding-left:14px"><span class="tag" style="left:13px;top:10px;background:#d2e7dd;color:#222;line-height:32px">在施</span></div>
<div class="fl" style="left:47px;top:208px">立项日期</div>
<div class="fl" style="left:414.5px;top:208px">发包单位<i>*</i></div>
<div class="fl" style="left:781px;top:208px">承包单位<i>*</i></div>
<div class="fl" style="left:1148px;top:208px">工程造价</div>
<div class="fb" style="left:33px;top:239px;width:344.5px;height:52px;padding-left:14px"><span class="n nd">2024-08-05</span></div>
<div class="fb" style="left:400.5px;top:239px;width:344.5px;height:52px;padding-left:14px"><svg style="position:absolute;left:16.5px;top:14px" width="24" height="22" viewBox="0 0 24 22"><path d="M0 0h11.6v4.6h12v16.8H0z" fill="#5a80f2"/><path d="M11.6 7.1h10v12.2h-10v-2.4h2v-2.6h-2v-2.2h2V9.6h-2z" fill="#f3f4f6"/><g fill="#f3f4f6"><rect x="2" y="2.3" width="2.6" height="2.4"/><rect x="6.9" y="2.3" width="2.6" height="2.4"/><rect x="2" y="7.1" width="2.6" height="2.5"/><rect x="6.9" y="7.1" width="2.6" height="2.5"/><rect x="2" y="12" width="2.6" height="2.4"/><rect x="6.9" y="12" width="2.6" height="2.4"/><rect x="2" y="16.9" width="2.6" height="2.4"/><rect x="6.9" y="16.9" width="2.6" height="2.4"/></g><rect x="16.5" y="9.6" width="2.5" height="2.5" fill="#5a80f2"/><rect x="16.5" y="14.3" width="2.5" height="2.5" fill="#5a80f2"/></svg><span style="position:absolute;left:55px">中国建筑集团有限公司</span></div>
<div class="fb" style="left:767px;top:239px;width:344.5px;height:52px;padding-left:14px"><svg style="position:absolute;left:16.5px;top:14px" width="24" height="22" viewBox="0 0 24 22"><path d="M0 0h11.6v4.6h12v16.8H0z" fill="#5a80f2"/><path d="M11.6 7.1h10v12.2h-10v-2.4h2v-2.6h-2v-2.2h2V9.6h-2z" fill="#f3f4f6"/><g fill="#f3f4f6"><rect x="2" y="2.3" width="2.6" height="2.4"/><rect x="6.9" y="2.3" width="2.6" height="2.4"/><rect x="2" y="7.1" width="2.6" height="2.5"/><rect x="6.9" y="7.1" width="2.6" height="2.5"/><rect x="2" y="12" width="2.6" height="2.4"/><rect x="6.9" y="12" width="2.6" height="2.4"/><rect x="2" y="16.9" width="2.6" height="2.4"/><rect x="6.9" y="16.9" width="2.6" height="2.4"/></g><rect x="16.5" y="9.6" width="2.5" height="2.5" fill="#5a80f2"/><rect x="16.5" y="14.3" width="2.5" height="2.5" fill="#5a80f2"/></svg><span style="position:absolute;left:55px">伙伴云</span></div>
<div class="fb" style="left:1134px;top:239px;width:344.5px;height:52px;padding-left:14px"><span class="n">8000000.00</span> 元</div>
<div class="fl" style="left:47px;top:318px">省</div>
<div class="fl" style="left:414.5px;top:318px">市</div>
<div class="fl" style="left:781px;top:318px">工程详细地址</div>
<div class="fl" style="left:1148px;top:318px">地图定位</div>
<div class="fb" style="left:33px;top:349px;width:344.5px;height:51px;padding-left:14px"><svg style="position:absolute;left:17px;top:16px" width="24" height="19" viewBox="0 0 24 19"><rect x="0" y="0" width="24" height="19" rx="3.5" fill="#5a80f2"/><path d="M7.65 0v19M16.15 0v19M0 6.4h24M0 13.2h24" stroke="#f3f4f6" stroke-width="1.4"/></svg><span style="position:absolute;left:55px">北京市</span></div>
<div class="fb" style="left:400.5px;top:349px;width:344.5px;height:51px;padding-left:14px"><svg style="position:absolute;left:17px;top:16px" width="24" height="19" viewBox="0 0 24 19"><rect x="0" y="0" width="24" height="19" rx="3.5" fill="#5a80f2"/><path d="M7.65 0v19M16.15 0v19M0 6.4h24M0 13.2h24" stroke="#f3f4f6" stroke-width="1.4"/></svg><span style="position:absolute;left:55px">北京市</span></div>
<div class="fb" style="left:767px;top:349px;width:344.5px;height:51px;padding-left:14px">北京市海淀区</div>
<div class="fb" style="left:1134px;top:349px;width:344.5px;height:51px;padding-left:14px"></div>
<div class="fl" style="left:47px;top:428px">工程概况</div>
<div class="fb" style="left:33px;top:459px;width:1445px;height:51px;padding-left:14px">该工程主要包括土建工程、设备安装和调试等内容</div>
<div class="sh" style="top:535px">项目成员</div>
<div class="fl" style="left:47px;top:596px">所属项目部</div>
<div class="fl" style="left:536px;top:596px">项目经理</div>
<div class="fl" style="left:1025px;top:596px">项目成员</div>
<div class="fb" style="left:33px;top:627px;width:467px;height:89px;padding-left:14px"><svg style="position:absolute;left:17px;top:16px" width="24" height="19" viewBox="0 0 24 19"><path d="M3 0h7.4l2.3 2.4H21a3 3 0 0 1 3 3V16a3 3 0 0 1-3 3H3a3 3 0 0 1-3-3V3a3 3 0 0 1 3-3z" fill="#5a80f2"/><circle cx="15.5" cy="8.3" r="2.5" fill="#fff"/><path d="M10.8 15.8c.4-2.6 2.4-3.6 4.7-3.6s4.3 1 4.7 3.6z" fill="#fff"/></svg><span style="position:absolute;left:55px;top:0;line-height:52px">华北项目部</span><span style="position:absolute;left:13px;top:52px;line-height:26px;font-size:19.2px;color:#4ba6d8">展开附加信息</span></div>
<div class="fb" style="left:522px;top:627px;width:467px;height:52px;padding-left:14px"><span style="position:absolute;left:13px;top:10px;height:32px;width:121px;border-radius:16px;background:#e4e4e6"></span><span style="position:absolute;left:13px;top:10px;width:32px;height:32px;border-radius:50%;background:#8fd1a3;color:#fff;font-size:18px;line-height:32px;text-align:center">心</span><span class="ls" style="position:absolute;left:56px;top:0;font-size:22.4px">郭紫心</span></div>
<div class="fb" style="left:1011px;top:627px;width:467px;height:52px;padding-left:14px"><span style="position:absolute;left:13px;top:10px;height:32px;width:121px;border-radius:16px;background:#e4e4e6"></span><span style="position:absolute;left:13px;top:10px;width:32px;height:32px;border-radius:50%;background:#8fd1a3;color:#fff;font-size:18px;line-height:32px;text-align:center">心</span><span class="ls" style="position:absolute;left:56px;top:0;font-size:22.4px">郭紫心</span><span style="position:absolute;left:141px;top:10px;height:32px;width:122px;border-radius:16px;background:#e4e4e6"></span><span style="position:absolute;left:141px;top:10px;width:32px;height:32px;border-radius:50%;background:linear-gradient(#a8c4d8,#3d6278)"></span><svg style="position:absolute;left:147px;top:18px" width="20" height="14" viewBox="0 0 20 14"><path d="M1 8c4-1 7 1 9 3 2-4 5-7 9-10-3 4-5 8-7 12-3-3-6-4-11-5z" fill="#2a2a2a"/></svg><span class="ls" style="position:absolute;left:184px;top:0;font-size:22.4px">郭淑娴</span></div>
<div class="sh" style="top:740.5px">项目资金</div>
<div class="fl" style="left:47px;top:801.5px">施工合同总额</div>
<div class="fl" style="left:414.5px;top:801.5px">项目预算总额</div>
<div class="fl" style="left:781px;top:801.5px">支出合同总额</div>
<div class="fl" style="left:1148px;top:801.5px">项目目标利润率</div>
<div class="fb" style="left:33px;top:833px;width:344.5px;height:51px;padding-left:14px"><span class="n">4,000,000.00</span> 元</div>
<div class="fb" style="left:400.5px;top:833px;width:344.5px;height:51px;padding-left:14px"><span class="n">3,400,000.00</span> 元</div>
<div class="fb" style="left:767px;top:833px;width:344.5px;height:51px;padding-left:14px"><span class="n">3,630,000.00</span> 元</div>
<div class="fb" style="left:1134px;top:833px;width:344.5px;height:51px;padding-left:14px"><span class="n">15.00%</span></div>
<div class="fl" style="left:47px;top:912px">项目总收款</div>
<div class="fl" style="left:414.5px;top:912px">项目总支出</div>
<div class="fl" style="left:781px;top:912px">项目收支差额</div>
<div class="fl" style="left:1148px;top:912px">项目实际利润率</div>
<div class="fb" style="left:33px;top:943px;width:344.5px;height:51px;padding-left:14px"><span class="n">2,600,000.00</span> 元</div>
<div class="fb" style="left:400.5px;top:943px;width:344.5px;height:51px;padding-left:14px"><span class="n">2,542,050.00</span> 元</div>
<div class="fb" style="left:767px;top:943px;width:344.5px;height:51px;padding-left:14px"><span class="n">57,950.00</span> 元</div>
<div class="fb" style="left:1134px;top:943px;width:344.5px;height:51px;padding-left:14px"><span class="n">2.23%</span></div>
<div class="fl" style="left:47px;top:1022px">项目备用金金额</div>
<div class="fl" style="left:781px;top:1022px">预算使用比例</div>
</div>
</div>
</div>
</body></html>
